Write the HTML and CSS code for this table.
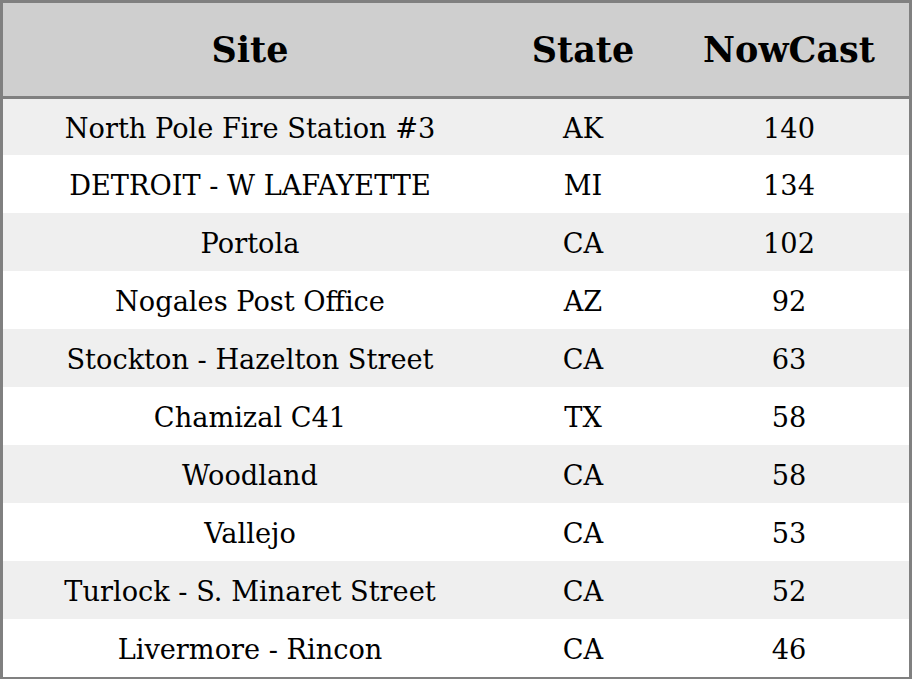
FILE: index.html
```html
<!DOCTYPE html>
<html>
<head>
<meta charset="utf-8">
<link rel="stylesheet" href="styles.css">
</head>
<body>
<div class="table">
  <div class="row head">
    <div class="cell">Site</div>
    <div class="cell">State</div>
    <div class="cell">NowCast</div>
  </div>
  <div class="row first"><div class="cell">North Pole Fire Station #3</div><div class="cell">AK</div><div class="cell">140</div></div>
  <div class="row"><div class="cell">DETROIT - W LAFAYETTE</div><div class="cell">MI</div><div class="cell">134</div></div>
  <div class="row"><div class="cell">Portola</div><div class="cell">CA</div><div class="cell">102</div></div>
  <div class="row"><div class="cell">Nogales Post Office</div><div class="cell">AZ</div><div class="cell">92</div></div>
  <div class="row"><div class="cell">Stockton - Hazelton Street</div><div class="cell">CA</div><div class="cell">63</div></div>
  <div class="row"><div class="cell">Chamizal C41</div><div class="cell">TX</div><div class="cell">58</div></div>
  <div class="row"><div class="cell">Woodland</div><div class="cell">CA</div><div class="cell">58</div></div>
  <div class="row"><div class="cell">Vallejo</div><div class="cell">CA</div><div class="cell">53</div></div>
  <div class="row"><div class="cell">Turlock - S. Minaret Street</div><div class="cell">CA</div><div class="cell">52</div></div>
  <div class="row"><div class="cell">Livermore - Rincon</div><div class="cell">CA</div><div class="cell">46</div></div>
</div>
</body>
</html>
```

FILE: styles.css
```css
html, body {
  margin: 0;
  padding: 0;
  background: #ffffff;
}
body {
  font-family: "DejaVu Serif", serif;
  color: #000;
}
.table {
  width: 912px;
  box-sizing: border-box;
  border: 3px solid #808080;
}
.row {
  display: grid;
  grid-template-columns: 494px 172px 240px;
  height: 58px;
  align-items: center;
  font-size: 27.2px;
  line-height: 32px;
  background: #ffffff;
}
.row:nth-child(even) {
  background: #efefef;
}
.row.first {
  height: 56px;
}
.cell {
  text-align: center;
  padding-top: 4px;
}
.row.first .cell {
  padding-top: 4px;
}
.row.head {
  height: 93px;
  background: #cfcfcf;
  border-bottom: 3px solid #808080;
  font-weight: bold;
  font-size: 35px;
  line-height: 40px;
}
.row.head .cell {
  padding-top: 0;
}
```
